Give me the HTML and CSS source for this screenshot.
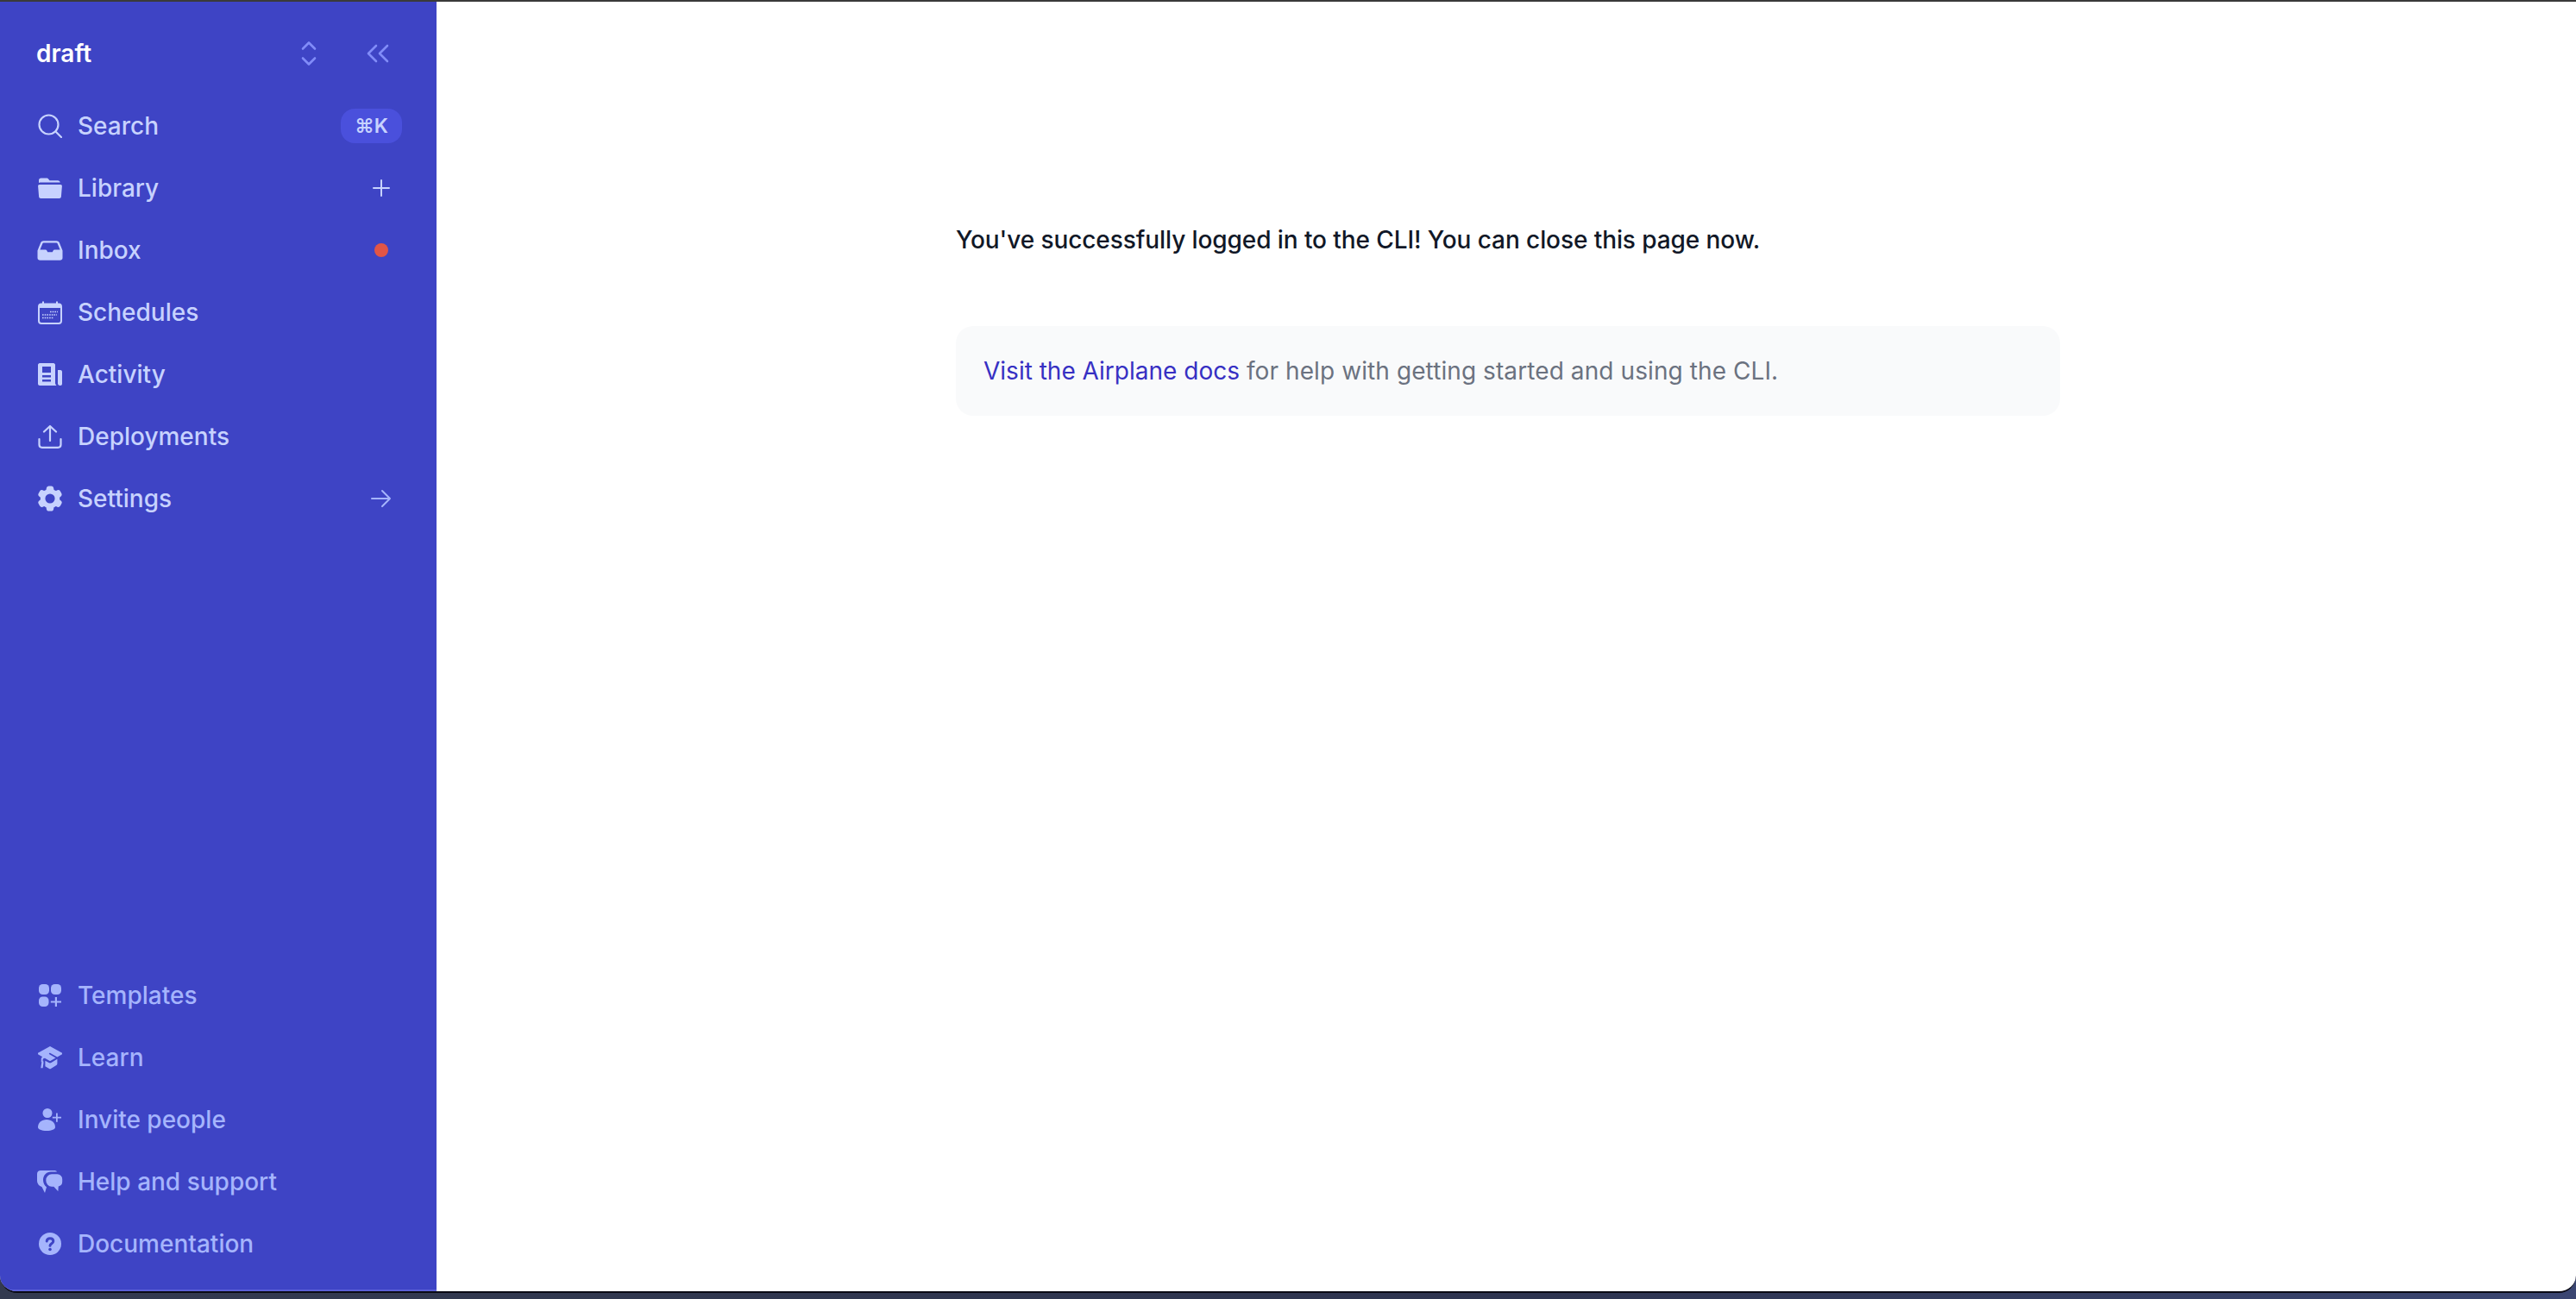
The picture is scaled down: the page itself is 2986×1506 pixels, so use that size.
FILE: index.html
```html
<!DOCTYPE html>
<html lang="en">
<head>
<meta charset="utf-8">
<title>Airplane</title>
<link rel="stylesheet" href="styles.css">
</head>
<body>
<div class="topline"></div>
<div class="window">
  <aside class="sidebar">
    <div class="brand">
      <span class="brand-name">draft</span>
      <svg class="updown" viewBox="0 0 18 30" fill="none" stroke="currentColor" stroke-width="2.6" stroke-linecap="round" stroke-linejoin="round"><path d="M2 9.500 9 2.500l7 7"/><path d="M2 20.500l7 7 7-7"/></svg>
      <svg class="collapse" viewBox="0 0 26 22" fill="none" stroke="currentColor" stroke-width="2.6" stroke-linecap="round" stroke-linejoin="round"><path d="M11 2 2 11l9 9"/><path d="M24 2l-9 9 9 9"/></svg>
    </div>
    <nav class="nav">
      <a class="row">
        <svg class="icon" viewBox="0 0 28 28" fill="none" stroke="currentColor" stroke-width="2.2" stroke-linecap="round"><circle cx="12.500" cy="12.500" r="11"/><path d="M20.500 20.500 27 27"/></svg>
        <span>Search</span><kbd class="kbd">⌘K</kbd>
      </a>
      <a class="row">
        <svg class="icon" viewBox="0 0 28 28" fill="currentColor"><path d="M3.500 2.500h6.500c1 0 1.700.5 2.300 1.200l1.200 1.500H23c1.500 0 2.600 1 2.800 2.400H3.200c-1 0-1.900.2-2.200.6V5c0-1.500 1-2.500 2.500-2.500z"/><path d="M1.800 10h24.400c1 0 1.800.8 1.700 1.800l-1 12.200c-.1 1.200-1 2-2.200 2H3.300c-1.200 0-2.100-.8-2.200-2L.1 11.800C0 10.800.8 10 1.800 10z"/></svg>
        <span>Library</span>
        <svg class="trail" viewBox="0 0 28 28" fill="none" stroke="currentColor" stroke-width="2" stroke-linecap="round"><path d="M14 5v18M5 14h18"/></svg>
      </a>
      <a class="row">
        <svg class="icon icon-wide icon-inbox" viewBox="0 0 30 28" preserveAspectRatio="none" fill="currentColor"><path fill-rule="evenodd" d="M7.500 1.500h15c1.500 0 2.700.8 3.300 2.200L29.500 14v9.500c0 1.900-1.300 3-3 3h-23c-1.700 0-3-1.100-3-3V14L4.200 3.700C4.800 2.300 6 1.500 7.500 1.500zm0 2.500c-.7 0-1 .3-1.200.9L3.400 13h6.300c.8 0 1.300.4 1.600 1l.9 2h5.600l.9-2c.3-.6.800-1 1.600-1h6.300L23.700 4.900c-.2-.6-.5-.9-1.200-.9z"/></svg>
        <span>Inbox</span><i class="dot"></i>
      </a>
      <a class="row">
        <svg class="icon" viewBox="0 0 28 28"><path fill="none" stroke="currentColor" stroke-width="2" d="M4 4.500h20c1.700 0 3 1.300 3 3V24c0 1.700-1.300 3-3 3H4c-1.700 0-3-1.300-3-3V7.500c0-1.700 1.300-3 3-3z"/><path fill="currentColor" d="M1 7c0-2 1.500-3 3-3h1V1.500h2V4h14V1.500h2V4h1c1.500 0 3 1 3 3v2H1z"/><path stroke="currentColor" stroke-width="1.600" stroke-dasharray="1.600 1.100" d="M14 13.500h9M5 17h17M5 20.500h13"/></svg>
        <span>Schedules</span>
      </a>
      <a class="row">
        <svg class="icon" viewBox="0 0 28 28" fill="currentColor"><path fill-rule="evenodd" d="M2 1h16c1 0 2 1 2 2v21c0 1 .6 2.200 1.500 3H2c-1 0-2-1-2-2V3c0-1 1-2 2-2zm3 4v7h10V5zm0 10v2.400h10V15zm0 5v2.400h10V20z"/><path d="M23 9h3c1 0 2 .8 2 2v14c0 1.200-.8 2-2 2h-.5c-1.500 0-2.500-1-2.500-2.500z"/></svg>
        <span>Activity</span>
      </a>
      <a class="row">
        <svg class="icon" viewBox="0 0 28 28" fill="none" stroke="currentColor" stroke-width="2.200" stroke-linecap="round" stroke-linejoin="round"><path d="M14 19V2M7 8.500 14 2l7 6.500"/><path d="M1.500 17v6.500c0 2 1.200 3.300 3.300 3.300h18.400c2.100 0 3.300-1.300 3.300-3.300V17"/></svg>
        <span>Deployments</span>
      </a>
      <a class="row">
        <svg class="icon icon-tall" viewBox="2.600 2.250 18.800 19.500" fill="currentColor"><path fill-rule="evenodd" d="M11.078 2.250c-.917 0-1.699.663-1.850 1.567L9.050 4.889c-.02.120-.115.260-.297.348a7.493 7.493 0 00-.986.570c-.166.115-.334.126-.450.083L6.300 5.508a1.875 1.875 0 00-2.282.819l-.922 1.597a1.875 1.875 0 00.432 2.385l.840.692c.095.078.170.229.154.430a7.598 7.598 0 000 1.139c.015.200-.059.352-.153.430l-.841.692a1.875 1.875 0 00-.432 2.385l.922 1.597a1.875 1.875 0 002.282.818l1.019-.382c.115-.043.283-.031.450.082.312.214.641.405.985.570.182.088.277.228.297.350l.178 1.071c.151.904.933 1.567 1.850 1.567h1.844c.916 0 1.699-.663 1.850-1.567l.178-1.072c.02-.120.114-.260.297-.349.344-.165.673-.356.985-.570.167-.114.335-.125.450-.082l1.020.382a1.875 1.875 0 002.280-.819l.923-1.597a1.875 1.875 0 00-.432-2.385l-.840-.692c-.095-.078-.170-.229-.154-.430a7.614 7.614 0 000-1.139c-.016-.200.059-.352.153-.430l.840-.692c.708-.582.891-1.590.433-2.385l-.922-1.597a1.875 1.875 0 00-2.282-.818l-1.020.382c-.114.043-.282.031-.449-.083a7.490 7.490 0 00-.985-.570c-.183-.087-.277-.227-.297-.348l-.179-1.072a1.875 1.875 0 00-1.850-1.567h-1.843zM12 15.750a3.750 3.750 0 100-7.500 3.750 3.750 0 000 7.500z"/></svg>
        <span>Settings</span>
        <svg class="trail arrow" viewBox="0 0 24 22" fill="none" stroke="currentColor" stroke-width="2" stroke-linecap="round" stroke-linejoin="round"><path d="M1 11h21M13 2l9 9-9 9"/></svg>
      </a>
    </nav>
    <nav class="nav nav-secondary">
      <a class="row">
        <svg class="icon" viewBox="0 0 28 28" fill="currentColor"><rect x="1" y="1" width="12" height="12" rx="4.500"/><rect x="15" y="1" width="12" height="12" rx="4.500"/><rect x="1" y="15.500" width="11.500" height="11.500" rx="4.500"/><path d="M19.800 16h2.200v4.400h5v2.200h-5V27h-2.200v-4.400h-5v-2.200h5z"/></svg>
        <span>Templates</span>
      </a>
      <a class="row">
        <svg class="icon" viewBox="0 0 30 30" fill="currentColor"><path fill-rule="evenodd" d="M15 1 30 9.500v1.500l-6 3.500-9-5c-1-.5-1.800.8-.8 1.400l7.800 4.600-6.200 3.500c-.5.300-1 .3-1.600 0L9 16c-1-.5-3 .5-3 2.200V21H4v-3c0-2 .3-2.800 1.500-3.700L0 11V9.500z"/><path d="M6.500 18.500 7 21.500 6 28H3.500l1-6.500zM9 19l4.500 2.500c1 .6 2 .6 3 0L24 17v5.500c0 1-.4 1.600-1.200 2.100L16 29c-.7.400-1.300.4-2 0l-5-3z"/></svg>
        <span>Learn</span>
      </a>
      <a class="row">
        <svg class="icon" viewBox="0 0 28 28" fill="currentColor"><circle cx="11" cy="6.500" r="5.500"/><path d="M0 23c0-5.500 4-9 10-9s10 3.500 10 9c0 2-4 4-10 4S0 25 0 23z"/><path d="M21 6.500h1.800v4.200H27v1.800h-4.200v4.200H21v-4.200h-4.200v-1.800H21z"/></svg>
        <span>Invite people</span>
      </a>
      <a class="row">
        <svg class="icon icon-wide" viewBox="0 0 30 28" fill="currentColor"><path d="M4 1h16c1.500 0 2.500.5 3 1.500h-7C11 2.500 7 6.500 7 12c0 3.500 1.600 6.500 4 8.200L9 27 5.500 20C2.500 19 0 16.500 0 12.500V5c0-2.500 1.800-4 4-4z"/><path class="bubble" d="M17 4.500h6.500c3.600 0 6.500 2.900 6.500 6.500v3c0 3-2 5.400-4.500 6.100L25 27l-6-6.500h-2c-4 0-7.500-3-7.500-8S13 4.500 17 4.500z"/></svg>
        <span>Help and support</span>
      </a>
      <a class="row">
        <svg class="icon" viewBox="0 0 28 28"><circle cx="14" cy="14" r="13" fill="currentColor"/><path class="cutout" stroke-width="3" stroke-linecap="round" d="M10.200 11c.2-2 1.700-3.200 3.800-3.200s3.800 1.200 3.800 3.200c0 2.800-3.800 2.800-3.800 5.300"/><circle class="cutout-dot" cx="14" cy="20.500" r="1.800"/></svg>
        <span>Documentation</span>
      </a>
    </nav>
  </aside>
  <main class="main">
    <div class="content">
      <p class="lead">You've successfully logged in to the CLI! You can close this page now.</p>
      <div class="note"><a class="note-link">Visit the Airplane docs</a> for help with getting started and using the CLI.</div>
    </div>
  </main>
</div>
</body>
</html>
```
FILE: styles.css
```css
* { box-sizing: border-box; }

html, body { height: 100%; }

body {
  margin: 0;
  display: flex;
  flex-direction: column;
  overflow: hidden;
  background: linear-gradient(90deg, #333a4f 0%, #2e3450 60%, #3b4672 100%);
  font-family: Inter, "Noto Sans", sans-serif;
  font-size: 28px;
  font-weight: 500;
}

.topline { height: 2px; flex: none; background: #3a3a3a; }

.window {
  height: 1497px;
  flex: none;
  display: flex;
  overflow: hidden;
  background: #fff;
  border-bottom: 2px solid #0a0a14;
  border-radius: 0 0 20px 20px;
}

.sidebar {
  width: 506px;
  flex: none;
  display: flex;
  flex-direction: column;
  padding: 24px 40px 17px 44px;
  background: #3e44c5;
  border-bottom: 2px solid #5a5fd6;
  color: #c7d2fe;
}

.brand {
  height: 72px;
  margin-bottom: 12px;
  display: flex;
  align-items: center;
}

.brand-name { color: #fff; font-weight: 600; margin-right: auto; margin-left: -2px; }

.updown { width: 18px; height: 30px; color: #818cf8; }

.collapse { width: 26px; height: 22px; margin: 0 15px 0 58px; color: #818cf8; }

.nav { display: flex; flex-direction: column; }

.nav-secondary { margin-top: auto; color: #a5b4fc; }

.row { height: 72px; display: flex; align-items: center; gap: 18px; }

.icon { width: 28px; height: 28px; flex: none; }

.icon-wide { width: 30px; margin: 0 -1px; }

.icon-inbox { height: 25px; }

.icon-tall { height: 30px; }

.bubble { stroke: #3e44c5; stroke-width: 1.600; }

.cutout { fill: none; stroke: #3e44c5; }

.cutout-dot { fill: #3e44c5; }

.kbd {
  margin-left: auto;
  height: 40px;
  width: 71px;
  display: flex;
  align-items: center;
  justify-content: center;
  border-radius: 16px;
  background: #4a50dc;
  font-family: Inter, "DejaVu Sans", sans-serif;
  font-size: 23px;
  font-weight: 600;
}

.trail { width: 28px; height: 28px; margin-left: auto; margin-right: 10px; color: #c7d2fe; }

.arrow { width: 24px; height: 22px; margin-right: 12px; color: #a5b4fc; }

.dot {
  width: 16px;
  height: 16px;
  margin-left: auto;
  margin-right: 16px;
  border-radius: 50%;
  background: #e25546;
}

.main { flex: 1; padding: 256px 0 0 4px; }

.content { width: 1280px; margin: 0 auto; }

.lead { margin: 0 0 80px; line-height: 40px; letter-spacing: -0.085px; color: #111827; }

.note {
  height: 104px;
  padding: 0 32px;
  line-height: 104px;
  letter-spacing: 0.09px;
  border-radius: 20px;
  background: #f9fafb;
  font-weight: 400;
  color: #6b7280;
}

.note-link { letter-spacing: 0; color: #3730c3; }
```
